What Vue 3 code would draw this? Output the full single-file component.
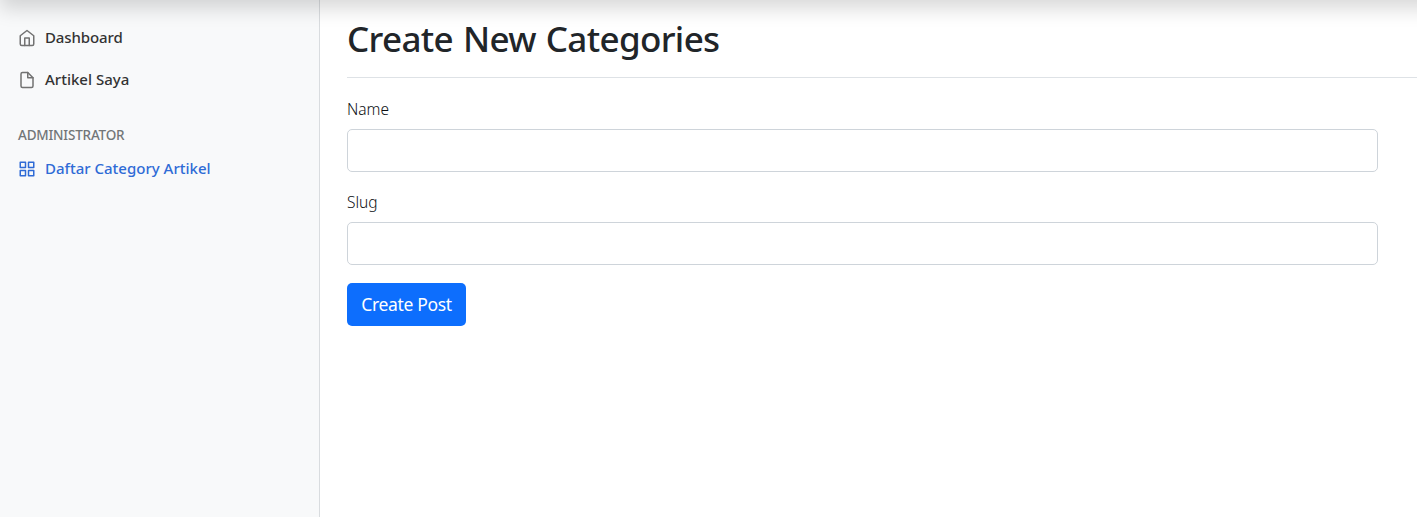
<script setup>
</script>

<template>
  <div class="page">
    <nav class="sidebar">
      <a class="link" href="#">
        <svg viewBox="0 0 24 24"><path d="M3 9l9-7 9 7v11a2 2 0 0 1-2 2H5a2 2 0 0 1-2-2z" /><path d="M9 22V12h6v10" /></svg>
        <span class="t-dash">Dashboard</span>
      </a>
      <a class="link" href="#">
        <svg viewBox="0 0 24 24"><path d="M13 2H6a2 2 0 0 0-2 2v16a2 2 0 0 0 2 2h12a2 2 0 0 0 2-2V9z" /><path d="M13 2v7h7" /></svg>
        <span>Artikel Saya</span>
      </a>
      <h6 class="heading">ADMINISTRATOR</h6>
      <a class="link active" href="#">
        <svg viewBox="0 0 24 24"><path d="M3 3h7v7H3zM14 3h7v7h-7zM14 14h7v7h-7zM3 14h7v7H3z" /></svg>
        <span>Daftar Category Artikel</span>
      </a>
    </nav>
    <main class="main">
      <div class="title"><h1>Create New Categories</h1></div>
      <form @submit.prevent>
        <label for="name">Name</label>
        <input id="name" type="text" />
        <label for="slug">Slug</label>
        <input id="slug" type="text" />
        <button type="submit">Create Post</button>
      </form>
    </main>
    <div class="topshade"></div>
  </div>
</template>

<style>
body { overflow: hidden; background: #fff; }
</style>

<style scoped>
.page { position: relative; display: flex; width: 1417px; height: 517px; overflow: hidden; box-sizing: border-box; font-family: "Segoe UI", "Noto Sans", "Open Sans", sans-serif; color: #212529; }
.page * { box-sizing: border-box; }
.sidebar { width: 320px; flex: none; background: #f8f9fa; border-right: 1px solid #d9dcdf; padding: 17px 18px; }
.link { display: flex; align-items: center; height: 42px; gap: 9px; color: #333; font-size: 15px; font-weight: 500; text-decoration: none; white-space: nowrap; }
.link span { line-height: 20px; padding-bottom: 2px; }
.t-dash { letter-spacing: -0.1px; }
.link svg { width: 18px; height: 18px; fill: none; stroke: #727272; stroke-width: 2; stroke-linecap: round; stroke-linejoin: round; }
.link.active { color: #2f6bd6; }
.link.active svg { stroke: #2f6bd6; }
.heading { margin: 24px 0 3px; height: 20px; line-height: 20px; font-size: 13.5px; font-weight: 500; letter-spacing: -0.2px; color: #727678; }
.main { flex: 1; padding-left: 27px; }
.title { height: 78px; border-bottom: 1px solid #dee2e6; }
h1 { margin: 0; padding-top: 17px; font-size: 35px; line-height: 44px; font-weight: 500; letter-spacing: -0.65px; word-spacing: 1.5px; white-space: nowrap; }
form { display: flex; flex-direction: column; align-items: flex-start; padding-top: 18px; }
label { height: 26px; line-height: 26px; font-size: 15.5px; font-weight: 300; color: #0c0f12; margin-bottom: 7px; }
input { width: 1031px; height: 43px; margin: 0 0 17px; border: 1px solid #ced4da; border-radius: 5px; background: #fff; padding: 0 12px; }
button { width: 119px; height: 43px; margin-top: 1px; padding: 0 0 1px; border: 0; border-radius: 5px; background: #0d6efd; color: #fff; font: 17.5px "Segoe UI", "Noto Sans", "Open Sans", sans-serif; letter-spacing: -0.35px; white-space: nowrap; }
.topshade { position: absolute; left: 0; right: -40px; top: -60px; height: 60px; box-shadow: 0 9px 18px rgba(0,0,0,.15); pointer-events: none; }
</style>
